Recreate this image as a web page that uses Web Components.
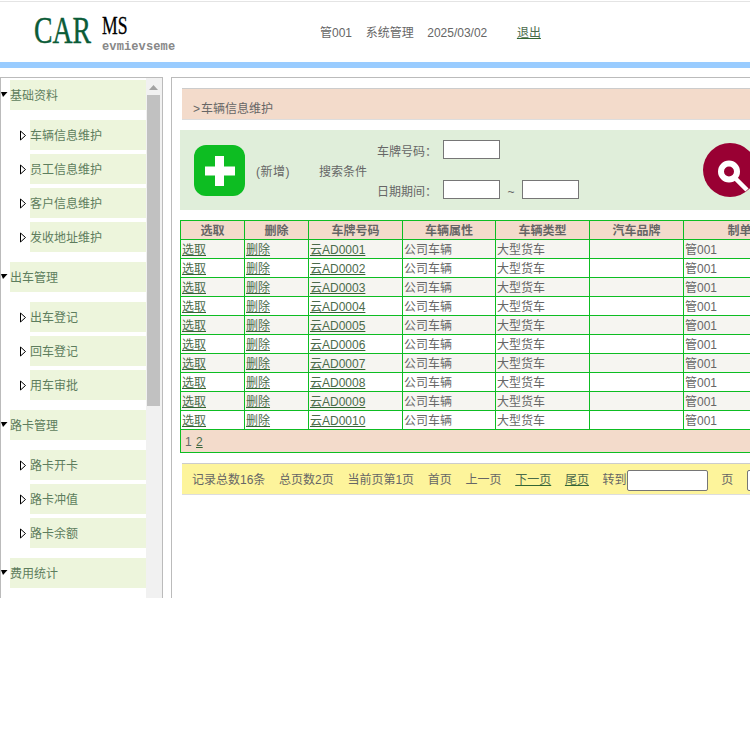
<!DOCTYPE html>
<html lang="zh">
<head>
<meta charset="utf-8">
<title>CAR MS</title>
<style>
  html, body { margin: 0; height: 750px; overflow: hidden; background: #fff; }
  body { font: 12px/18px "Liberation Sans", "Noto Sans CJK SC", sans-serif; color: #666; }
  .main { display: flex; gap: 8px; margin-top: 9px; height: 521px; overflow: hidden; }
</style>
</head>
<body>
<app-header></app-header>
<div class="main">
  <side-nav>
    <nav-item group>基础资料</nav-item>
    <nav-item>车辆信息维护</nav-item>
    <nav-item>员工信息维护</nav-item>
    <nav-item>客户信息维护</nav-item>
    <nav-item>发收地址维护</nav-item>
    <nav-item group>出车管理</nav-item>
    <nav-item>出车登记</nav-item>
    <nav-item>回车登记</nav-item>
    <nav-item>用车审批</nav-item>
    <nav-item group>路卡管理</nav-item>
    <nav-item>路卡开卡</nav-item>
    <nav-item>路卡冲值</nav-item>
    <nav-item>路卡余额</nav-item>
    <nav-item group>费用统计</nav-item>
  </side-nav>
  <content-panel>
    <search-bar></search-bar>
    <car-table></car-table>
    <page-bar></page-bar>
  </content-panel>
</div>
<script>
class AppHeader extends HTMLElement {
  connectedCallback() {
    this.shadow = this.attachShadow({ mode: "open" });
    this.shadow.innerHTML = `
      <style>
        :host { display: block; padding-top: 1px; }
        .top {
          display: flex;
          align-items: center;
          height: 60px;
          border-top: 1px solid #e4e4e4;
          border-bottom: 6px solid #99ccff;
        }
        .logo { position: relative; width: 320px; height: 60px; flex: none; }
        .logo span { position: absolute; white-space: nowrap; transform-origin: 0 0; }
        .car { left: 34px; top: 8px; font: 38px/40px "Liberation Serif", serif; color: #0b5c38; transform: scaleX(.73); -webkit-text-stroke: .4px #0b5c38; }
        .ms { left: 102px; top: 10px; font: 26px/28px "Liberation Serif", serif; color: #000; transform: scaleX(.68); -webkit-text-stroke: .3px #000; }
        .sub { left: 102px; top: 37px; font: bold 12px/16px "Liberation Mono", monospace; color: #888; letter-spacing: .12px; }
        .info { display: flex; gap: 13.6px; margin-top: 1px; }
        a { color: #4b6b4b; text-decoration: underline #336633; margin-left: 16px; }
      </style>
      <div class="top">
        <div class="logo"><span class="car">CAR</span><span class="ms">MS</span><span class="sub">evmievseme</span></div>
        <div class="info">
          <span>管001</span><span>系统管理</span><span>2025/03/02</span><a>退出</a>
        </div>
      </div>
    `;
  }
}

class SideNav extends HTMLElement {
  connectedCallback() {
    this.shadow = this.attachShadow({ mode: "open" });
    this.shadow.innerHTML = `
      <style>
        :host {
          display: flex;
          flex: none;
          box-sizing: border-box;
          width: 163px;
          height: 521px;
          border: 1px solid #bbb;
          border-width: 1px 1px 0 1px;
          overflow: hidden;
        }
        .list { width: 145px; flex: none; padding-top: 2px; box-sizing: border-box; }
        .bar { width: 16px; background: #f1f1f1; display: flex; flex-direction: column; padding-top: 2px; }
        .up { width: 15px; height: 15px; display: flex; align-items: center; justify-content: center; }
        .thumb { width: 13px; height: 311px; margin-left: 1px; background: #c1c1c1; }
      </style>
      <div class="list"><slot></slot></div>
      <div class="bar">
        <div class="up"><svg width="9" height="5" viewBox="0 0 9 5"><path d="M0 5L4.5 0L9 5Z" fill="#a3a3a3"/></svg></div>
        <div class="thumb"></div>
      </div>
    `;
  }
}

class NavItem extends HTMLElement {
  connectedCallback() {
    this.shadow = this.attachShadow({ mode: "open" });
    const isGroup = this.hasAttribute('group');
    const arrow = isGroup
      ? '<svg width="9" height="6" viewBox="0 0 9 6"><path d="M0 0H6.5L2 5Z" fill="#000"/></svg>'
      : '<svg width="7" height="11" viewBox="0 0 7 11"><path d="M.5 1L5.5 5.5L.5 10Z" fill="#fff" stroke="#000"/></svg>';
    this.shadow.innerHTML = `
      <style>
        :host {
          display: flex;
          align-items: center;
          margin: 4px 0 4px ${isGroup ? 0 : 19}px;
          color: #5d7d5d;
        }
        :host([group]) { margin: 10px 0; }
        :host(:first-child) { margin-top: 0; }
        .arrow { width: ${isGroup ? 9 : 10}px; flex: none; display: flex; }
        .label {
          flex: 1;
          height: 30px;
          line-height: 32px;
          background: #edf5dc;
        }
      </style>
      <div class="arrow">${arrow}</div>
      <div class="label"><slot></slot></div>
    `;
  }
}

class ContentPanel extends HTMLElement {
  connectedCallback() {
    this.shadow = this.attachShadow({ mode: "open" });
    this.shadow.innerHTML = `
      <style>
        :host {
          display: block;
          flex: none;
          width: 900px;
          height: 521px;
          box-sizing: border-box;
          border-top: 1px solid #bbb;
          border-left: 1px solid #bbb;
          padding: 10px 0 0 8px;
        }
        .crumb {
          margin-left: 2px;
          height: 30px;
          padding-left: 11px;
          line-height: 41px;
          background: #f3dbcb;
          border-top: 1px solid #ccc;
          border-bottom: 1px solid #ddd;
          color: #666;
        }
        .crumb span { margin-right: 1px; }
      </style>
      <div class="crumb"><span>&gt;</span>车辆信息维护</div>
      <slot></slot>
    `;
  }
}

class SearchBar extends HTMLElement {
  connectedCallback() {
    this.shadow = this.attachShadow({ mode: "open" });
    this.shadow.innerHTML = `
      <style>
        :host {
          display: flex;
          align-items: center;
          height: 80px;
          margin-top: 10px;
          background: #e0eeda;
        }
        .add { margin-left: 14px; flex: none; display: block; }
        .new { margin-left: 11px; margin-top: 4px; width: 63px; flex: none; letter-spacing: .5px; }
        .cond { margin-top: 4px; width: 58px; flex: none; }
        .fields { display: flex; flex-direction: column; gap: 21px; width: 202px; flex: none; margin-top: -1px; }
        .row { display: flex; align-items: center; height: 19px; }
        .row label { width: 66px; flex: none; padding-top: 4px; }
        input {
          box-sizing: border-box;
          width: 57px;
          height: 19px;
          margin: 0;
          padding: 0;
          border: 1px solid #767676;
          background: #fff;
        }
        .tilde { width: 22px; text-align: center; padding-top: 4px; }
        .find { margin-left: 124px; flex: none; display: block; }
      </style>
      <svg class="add" width="51" height="51" viewBox="0 0 51 51">
        <rect width="51" height="51" rx="12" fill="#0dbd22"/>
        <path d="M11 21.5H21V11H30V21.5H41V30.5H30V41H21V30.5H11Z" fill="#fff"/>
      </svg>
      <span class="new">(新增)</span>
      <span class="cond">搜索条件</span>
      <div class="fields">
        <div class="row"><label>车牌号码：</label><input></div>
        <div class="row"><label>日期期间：</label><input><span class="tilde">~</span><input></div>
      </div>
      <svg class="find" width="54" height="54" viewBox="0 0 54 54">
        <circle cx="27" cy="27" r="27" fill="#990033"/>
        <circle cx="26" cy="28.5" r="8" fill="none" stroke="#fff" stroke-width="6"/>
        <path d="M33 36L44 47" stroke="#fff" stroke-width="4.5"/>
      </svg>
    `;
  }
}

class CarTable extends HTMLElement {
  connectedCallback() {
    this.shadow = this.attachShadow({ mode: "open" });
    const widths = [64, 64, 94, 93, 94, 94, 124];
    const heads = ['选取', '删除', '车牌号码', '车辆属性', '车辆类型', '汽车品牌', '制单人'];
    let rows = '';
    for (let i = 1; i <= 10; i++) {
      const no = String(i).padStart(4, '0');
      rows += `<tr>
        <td><a>选取</a></td><td><a>删除</a></td><td><a>云AD${no}</a></td>
        <td>公司车辆</td><td>大型货车</td><td></td><td>管001</td>
      </tr>`;
    }
    this.shadow.innerHTML = `
      <style>
        :host { display: block; margin-top: 10px; }
        table { border-collapse: collapse; table-layout: fixed; width: ${widths.reduce((a, b) => a + b, 0)}px; }
        th, td {
          height: 16px;
          padding: 2px 0 0 1px;
          border: 1px solid #0dbd22;
          line-height: 16px;
          font-size: 12px;
          text-align: left;
          overflow: hidden;
          white-space: nowrap;
        }
        th { text-align: center; background: #f3dbcb; padding-left: 0; }
        tbody tr:nth-child(odd) td { background: #f6f5f1; }
        tbody tr:nth-child(even) td { background: #fff; }
        tfoot td { height: 20px; line-height: 20px; background: #f3dbcb; padding-left: 4px; }
        tfoot a { margin-left: 1px; }
        a { color: #4b6b4b; text-decoration: underline #336633; }
      </style>
      <table>
        <colgroup>${widths.map(w => `<col style="width:${w}px">`).join('')}</colgroup>
        <thead><tr>${heads.map(h => `<th>${h}</th>`).join('')}</tr></thead>
        <tbody>${rows}</tbody>
        <tfoot><tr><td colspan="7">1 <a>2</a></td></tr></tfoot>
      </table>
    `;
  }
}

class PageBar extends HTMLElement {
  connectedCallback() {
    this.shadow = this.attachShadow({ mode: "open" });
    this.shadow.innerHTML = `
      <style>
        :host {
          display: flex;
          align-items: center;
          gap: 13.7px;
          margin: 10px 0 0 2px;
          height: 28px;
          padding: 2px 0 0 10px;
          background: #fdf49b;
          border-top: 1px solid #ccc;
          border-bottom: 1px solid #ddd;
          white-space: nowrap;
        }
        a { color: #4b6b4b; text-decoration: underline #336633; }
        .jump { display: flex; align-items: center; }
        input {
          box-sizing: border-box;
          width: 81px;
          height: 21px;
          margin: 0;
          padding: 0;
          border: 1px solid #767676;
          border-radius: 2px;
          background: #fff;
        }
      </style>
      <span>记录总数16条</span>
      <span>总页数2页</span>
      <span>当前页第1页</span>
      <span>首页</span>
      <span>上一页</span>
      <a>下一页</a>
      <a>尾页</a>
      <span class="jump">转到<input></span>
      <span>页</span>
      <input style="width:60px">
    `;
  }
}

customElements.define('app-header', AppHeader);
customElements.define('side-nav', SideNav);
customElements.define('nav-item', NavItem);
customElements.define('content-panel', ContentPanel);
customElements.define('search-bar', SearchBar);
customElements.define('car-table', CarTable);
customElements.define('page-bar', PageBar);
</script>
</body>
</html>
